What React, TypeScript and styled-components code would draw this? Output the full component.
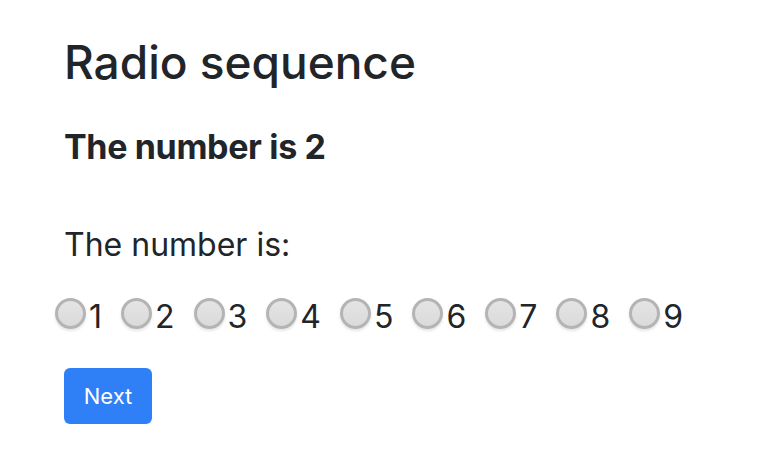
import React, { useState } from 'react'
import styled, { createGlobalStyle } from 'styled-components'

const GlobalStyle = createGlobalStyle`
body {
  margin: 0;
  background: #fff;
  font-family: Inter, "Helvetica Neue", Arial, sans-serif;
  color: #212529;
}
`

const Page = styled.div`
padding: 35px 64px;
display: flex;
flex-direction: column;
align-items: flex-start;
`
const Title = styled.h1`
margin: 0;
font-size: 46px;
font-weight: 500;
line-height: 55px;
`
const Result = styled.h5`
margin: 36px 0 0 0;
font-size: 34px;
font-weight: 700;
letter-spacing: -0.35px;
line-height: 41px;
`
const Question = styled.p`
margin: 54px 0 0 0;
font-size: 32px;
line-height: 48px;
`
const Radios = styled.div`
display: flex;
align-items: center;
gap: 19px;
margin: 25px 0 0 -9px;
`
const Option = styled.label`
display: flex;
align-items: center;
font-size: 32px;
line-height: 45px;
cursor: pointer;
`
const Dot = styled.input`
appearance: none;
box-sizing: border-box;
margin: 0 3px 7px 0;
width: 31px;
height: 31px;
border-radius: 50%;
border: 3px solid #b4b4b4;
background: linear-gradient(#e4e4e4, #dadada);
box-shadow: 0 2px 3px rgba(0, 0, 0, 0.1);
&:checked {
  border-color: #2f7ff7;
  background: radial-gradient(circle, #fff 30%, #2f7ff7 32%);
}
`
const Button = styled.button`
margin-top: 29px;
background: #2f80f7;
color: #fff;
border: none;
border-radius: 6px;
width: 88px;
height: 56px;
font-family: inherit;
font-size: 22px;
`

const App = () => {
  const [value, setValue] = useState<number | null>(null)
  const numbers = [1, 2, 3, 4, 5, 6, 7, 8, 9]
  return (
    <Page>
      <GlobalStyle />
      <Title>Radio sequence</Title>
      <Result>The number is 2</Result>
      <Question>The number is:</Question>
      <Radios>
        {numbers.map(n => (
          <Option key={n}>
            <Dot type="radio" name="num" checked={value === n} onChange={() => setValue(n)} />
            {n}
          </Option>
        ))}
      </Radios>
      <Button>Next</Button>
    </Page>
  )
}

export default App
